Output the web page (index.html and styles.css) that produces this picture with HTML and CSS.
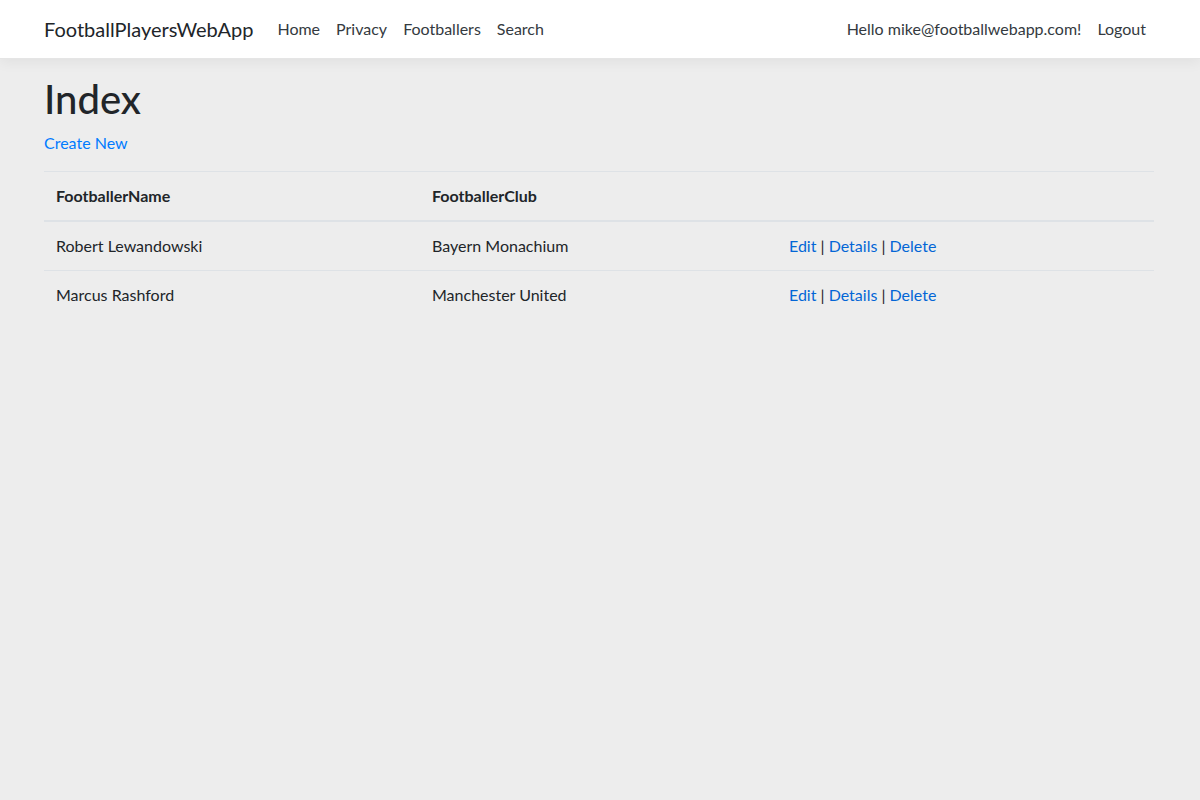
FILE: index.html
```html
<!DOCTYPE html>
<html lang="en">
<head>
<meta charset="utf-8">
<title>Index - FootballPlayersWebApp</title>
<link rel="stylesheet" href="styles.css">
</head>
<body>
<header>
  <nav class="navbar">
    <div class="container nav-inner">
      <a class="brand" href="#">FootballPlayersWebApp</a>
      <ul class="nav-list">
        <li><a class="nav-link" href="#">Home</a></li>
        <li><a class="nav-link" href="#">Privacy</a></li>
        <li><a class="nav-link" href="#">Footballers</a></li>
        <li><a class="nav-link" href="#">Search</a></li>
      </ul>
      <ul class="nav-list nav-right">
        <li><a class="nav-link" href="#">Hello mike@footballwebapp.com!</a></li>
        <li><a class="nav-link" href="#">Logout</a></li>
      </ul>
    </div>
  </nav>
</header>
<main class="container main">
  <h1 class="title">Index</h1>
  <p class="create"><a href="#">Create New</a></p>
  <table class="table">
    <thead>
      <tr>
        <th class="col-name">FootballerName</th>
        <th class="col-club">FootballerClub</th>
        <th></th>
      </tr>
    </thead>
    <tbody>
      <tr>
        <td>Robert Lewandowski</td>
        <td>Bayern Monachium</td>
        <td><a class="act" href="#">Edit</a> | <a class="act" href="#">Details</a> | <a class="act" href="#">Delete</a></td>
      </tr>
      <tr>
        <td>Marcus Rashford</td>
        <td>Manchester United</td>
        <td><a class="act" href="#">Edit</a> | <a class="act" href="#">Details</a> | <a class="act" href="#">Delete</a></td>
      </tr>
    </tbody>
  </table>
</main>
</body>
</html>
```

FILE: styles.css
```css
* { box-sizing: border-box; }
html, body { margin: 0; padding: 0; }
body {
  background: #ededed;
  color: #212529;
  font-family: "Segoe UI", Lato, "Noto Sans", sans-serif;
  font-size: 16px;
  line-height: 1.5;
  min-height: 800px;
}
a { text-decoration: none; }
.container {
  width: 1140px;
  margin: 0 auto;
  padding: 0 16px 0 14px;
}
.navbar {
  background: #fff;
  border-bottom: 1px solid #e5e5e5;
  box-shadow: 0 0.25rem 0.75rem rgba(0,0,0,.05);
  padding: 9px 0;
}
.nav-inner {
  display: flex;
  align-items: center;
}
.brand {
  color: #212529;
  font-size: 20px;
  line-height: 30px;
  padding: 5px 0;
  margin-right: 16px;
}
.nav-list {
  display: flex;
  list-style: none;
  margin: 0;
  padding: 0;
}
.nav-right { margin-left: auto; }
.nav-link {
  display: block;
  color: #343a40;
  padding: 8px 8px;
}
.main { padding-top: 16px; }
.title {
  font-size: 40px;
  font-weight: 500;
  line-height: 1.2;
  margin: 0 0 8px;
}
.create { margin: 0 0 16px; }
.create a { color: #007bff; }
.table {
  width: 100%;
  border-collapse: collapse;
  margin-bottom: 16px;
}
.table th, .table td {
  text-align: left;
  padding: 12px;
  border-top: 1px solid #dee2e6;
  vertical-align: top;
}
.table th { font-weight: 700; border-bottom: 2px solid #dee2e6; }
.col-name { width: 376px; }
.col-club { width: 357px; }
.act { color: #0366d6; }
```
